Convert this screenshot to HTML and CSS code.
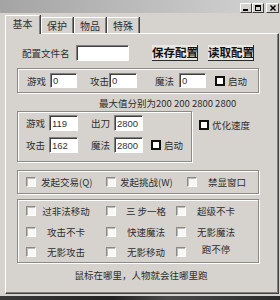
FILE: index.html
```html
<!DOCTYPE html>
<html>
  <head>
    <meta charset="utf-8">
    <title>基本</title>
    <link rel="stylesheet" href="styles.css">
  </head>
  <body>
    <div class="window">
      <div class="titlebar">
        <span class="ctl"><svg width="10" height="8" viewBox="0 0 10 8"><rect x="2" y="5" width="5" height="2" fill="#000"/></svg></span>
        <span class="ctl"><svg width="10" height="8" viewBox="0 0 10 8"><rect x="2.5" y="1.5" width="5" height="5" fill="none" stroke="#000"/><rect x="2" y="1" width="6" height="2" fill="#000"/></svg></span>
        <span class="ctl close"><svg width="10" height="8" viewBox="0 0 10 8"><path d="M2.5 1.5l5 5M7.5 1.5l-5 5" stroke="#000" stroke-width="1.5"/></svg></span>
      </div>

      <div class="tabs">
        <span class="tab active">基本</span>
        <span class="tab">保护</span>
        <span class="tab">物品</span>
        <span class="tab">特殊</span>
      </div>

      <div class="panel">
        <div class="file-row">
          <span class="file-label">配置文件名</span>
          <input class="field file" type="text" value="">
          <span class="btn save">保存配置</span>
          <span class="btn load">读取配置</span>
        </div>

        <div class="group g-cur">
          <span class="lbl">游戏</span>
          <input class="field f-cur" type="text" value="0">
          <span class="lbl l-atk">攻击</span>
          <input class="field f-cur f-atk" type="text" value="0">
          <span class="lbl l-mag">魔法</span>
          <input class="field f-cur f-mag" type="text" value="0">
          <span class="cbf c-start"></span>
          <span class="lbl-free">启动</span>
        </div>

        <p class="note">最大值分别为200 200 2800 2800</p>

        <div class="max-row">
          <div class="group g-max">
            <div class="mrow">
              <span class="lbl">游戏</span>
              <input class="field f-max" type="text" value="119">
              <span class="lbl l-right">出刀</span>
              <input class="field f-max" type="text" value="2800">
            </div>
            <div class="mrow">
              <span class="lbl">攻击</span>
              <input class="field f-max" type="text" value="162">
              <span class="lbl l-right">魔法</span>
              <input class="field f-max" type="text" value="2800">
              <span class="cbf c-max"></span>
              <span class="lbl-free">启动</span>
            </div>
          </div>
          <div class="opt">
            <span class="cbf"></span>
            <span class="lbl-free">优化速度</span>
          </div>
        </div>

        <div class="group g-act">
          <span class="cb"></span><span class="a1">发起交易(Q)</span>
          <span class="cb"></span><span class="a2">发起挑战(W)</span>
          <span class="cb"></span><span class="a3">禁显窗口</span>
        </div>

        <div class="group g-misc">
          <div class="crow">
            <span class="cb"></span><span class="cl">过非法移动</span>
            <span class="cb c2"></span><span class="cl">三 步一格</span>
            <span class="cb c3"></span><span class="cl">超级不卡</span>
          </div>
          <div class="crow">
            <span class="cb"></span><span class="cl">攻击不卡</span>
            <span class="cb c2"></span><span class="cl">快速魔法</span>
            <span class="cb c3"></span><span class="cl">无影魔法</span>
          </div>
          <div class="crow">
            <span class="cb"></span><span class="cl">无影攻击</span>
            <span class="cb c2"></span><span class="cl">无影移动</span>
            <span class="cb c3"></span><span class="cl run">跑不停</span>
          </div>
        </div>

        <p class="tip">鼠标在哪里，人物就会往哪里跑</p>
      </div>
    </div>
    <div class="taskbar"></div>
  </body>
</html>
```

FILE: styles.css
```css
* {
  box-sizing: border-box;
}

body {
  margin: 0;
  width: 280px;
  height: 300px;
  overflow: hidden;
  background-color: #2e2e2e;
  font-family: "Noto Sans CJK SC", "Liberation Sans", sans-serif;
  font-size: 9.5px;
  color: #2e2e2e;
}

.window {
  height: 296px;
  background-color: #d6d3ce;
}

/* title bar */

.titlebar {
  height: 13px;
  background: linear-gradient(to right, #a4a4a4, #d4d4d4);
  display: flex;
  justify-content: flex-end;
  padding: 3px 1px 0 0;
}

.ctl {
  width: 12px;
  height: 10px;
  background-color: #d6d3ce;
  border: 1px solid;
  border-color: #fff #404040 #404040 #fff;
  display: flex;
  align-items: center;
  justify-content: center;
}

.ctl.close {
  margin-left: 2px;
  width: 13px;
}

/* tabs */

.tabs {
  height: 20px;
  display: flex;
  align-items: flex-end;
  padding-left: 5px;
}

.tab {
  width: 32px;
  height: 16px;
  margin-right: 1px;
  border: 1px solid;
  border-bottom: none;
  border-color: #fff #808080 transparent #fff;
  box-shadow: 1px 0 0 #404040;
  text-align: center;
  font-size: 10px;
  line-height: 15px;
}

.tab.active {
  position: relative;
  z-index: 1;
  width: 35px;
  height: 19px;
  margin-bottom: -1px;
  background-color: #d6d3ce;
  line-height: 16px;
}

/* panel */

.panel {
  margin-left: 5px;
  width: 274px;
  height: 261px;
  border: 1px solid;
  border-color: #fff #404040 #404040 #fff;
  box-shadow: inset -1px -1px 0 #808080;
  padding-left: 11px;
}

.field {
  display: block;
  height: 15px;
  margin: 0;
  padding: 0 0 0 2px;
  border: 1px solid;
  border-color: #808080 #fff #fff #808080;
  box-shadow: inset 1px 1px 0 #404040;
  background-color: #fff;
  font-family: "Liberation Sans", sans-serif;
  font-size: 9.5px;
  color: #333;
  outline: none;
}

.file-row {
  margin-top: 10px;
  height: 17px;
  display: flex;
  align-items: center;
  padding-left: 5px;
}

.file-label {
  width: 47px;
  white-space: nowrap;
}

.field.file {
  margin-left: 7px;
  width: 53px;
  height: 16px;
}

.btn {
  width: 46px;
  height: 16px;
  font-size: 11.5px;
  font-weight: bold;
  line-height: 15px;
  color: #111;
  background-color: #e9e7e3;
  border-right: 1px solid #2a2a2a;
  border-bottom: 1px solid #2a2a2a;
  white-space: nowrap;
  overflow: hidden;
}

.btn.save {
  margin-left: 23px;
}

.btn.load {
  margin-left: 10px;
}

/* group boxes */

.group {
  border: 1px solid #8c8a86;
  box-shadow: 1px 1px 0 #fff, inset 1px 1px 0 #fff;
}

.lbl {
  width: 19px;
  white-space: nowrap;
}

.lbl-free {
  white-space: nowrap;
}

.g-cur {
  margin-top: 7px;
  width: 242px;
  height: 25px;
  display: flex;
  align-items: center;
  padding-left: 9px;
}

.f-cur {
  margin-left: 4px;
  width: 27px;
}

.l-atk {
  margin-left: 13px;
}

.f-atk {
  margin-left: 0;
  width: 28px;
}

.l-mag {
  margin-left: 18px;
}

.f-mag {
  margin-left: 5px;
}

.cbf {
  width: 10px;
  height: 10px;
  border: 2px solid #111;
  background-color: #fff;
  margin-right: 3px;
}

.c-start {
  margin-left: 9px;
}

.note {
  margin: 4px 0 0;
  height: 12px;
  line-height: 12px;
  padding-left: 82px;
  white-space: nowrap;
}

.max-row {
  margin-top: 2px;
  display: flex;
  align-items: flex-start;
}

.g-max {
  width: 175px;
  height: 51px;
  padding-left: 8px;
}

.mrow {
  height: 22px;
  display: flex;
  align-items: center;
}

.f-max {
  margin-left: 4px;
  width: 29px;
  height: 16px;
}

.l-right {
  margin-left: 13px;
}

.c-max {
  margin-left: 8px;
}

.opt {
  margin: 9px 0 0 7px;
  height: 10px;
  display: flex;
  align-items: center;
}

.cb {
  width: 10px;
  height: 10px;
  background-color: #f7f7f5;
  border: 1px solid;
  border-color: #8a8a8a #fff #fff #8a8a8a;
  box-shadow: inset 1px 1px 0 #bdbbb7;
}

.g-act {
  margin-top: 8px;
  width: 242px;
  height: 24px;
  display: flex;
  align-items: center;
  padding-left: 8px;
}

.a1 {
  margin-left: 5px;
  width: 65px;
  white-space: nowrap;
}

.a2 {
  margin-left: 4px;
  width: 67px;
  white-space: nowrap;
}

.a3 {
  margin-left: 11px;
  white-space: nowrap;
}

.g-misc {
  margin-top: 5px;
  width: 242px;
  height: 64px;
  padding: 1px 0 0 8px;
}

.crow {
  height: 20.5px;
  display: flex;
  align-items: center;
}

.cl {
  width: 60px;
  text-align: center;
  white-space: nowrap;
}

.c2 {
  margin-left: 10px;
}

.cl.run {
  padding-bottom: 7px;
}

.tip {
  margin: 6px 0 0;
  line-height: 12px;
  text-align: center;
  padding-right: 13px;
}

.taskbar {
  height: 4px;
  background: linear-gradient(to right, #3a3a3a, #222 40%, #4a4a4a 60%, #2a2a2a);
}
```
